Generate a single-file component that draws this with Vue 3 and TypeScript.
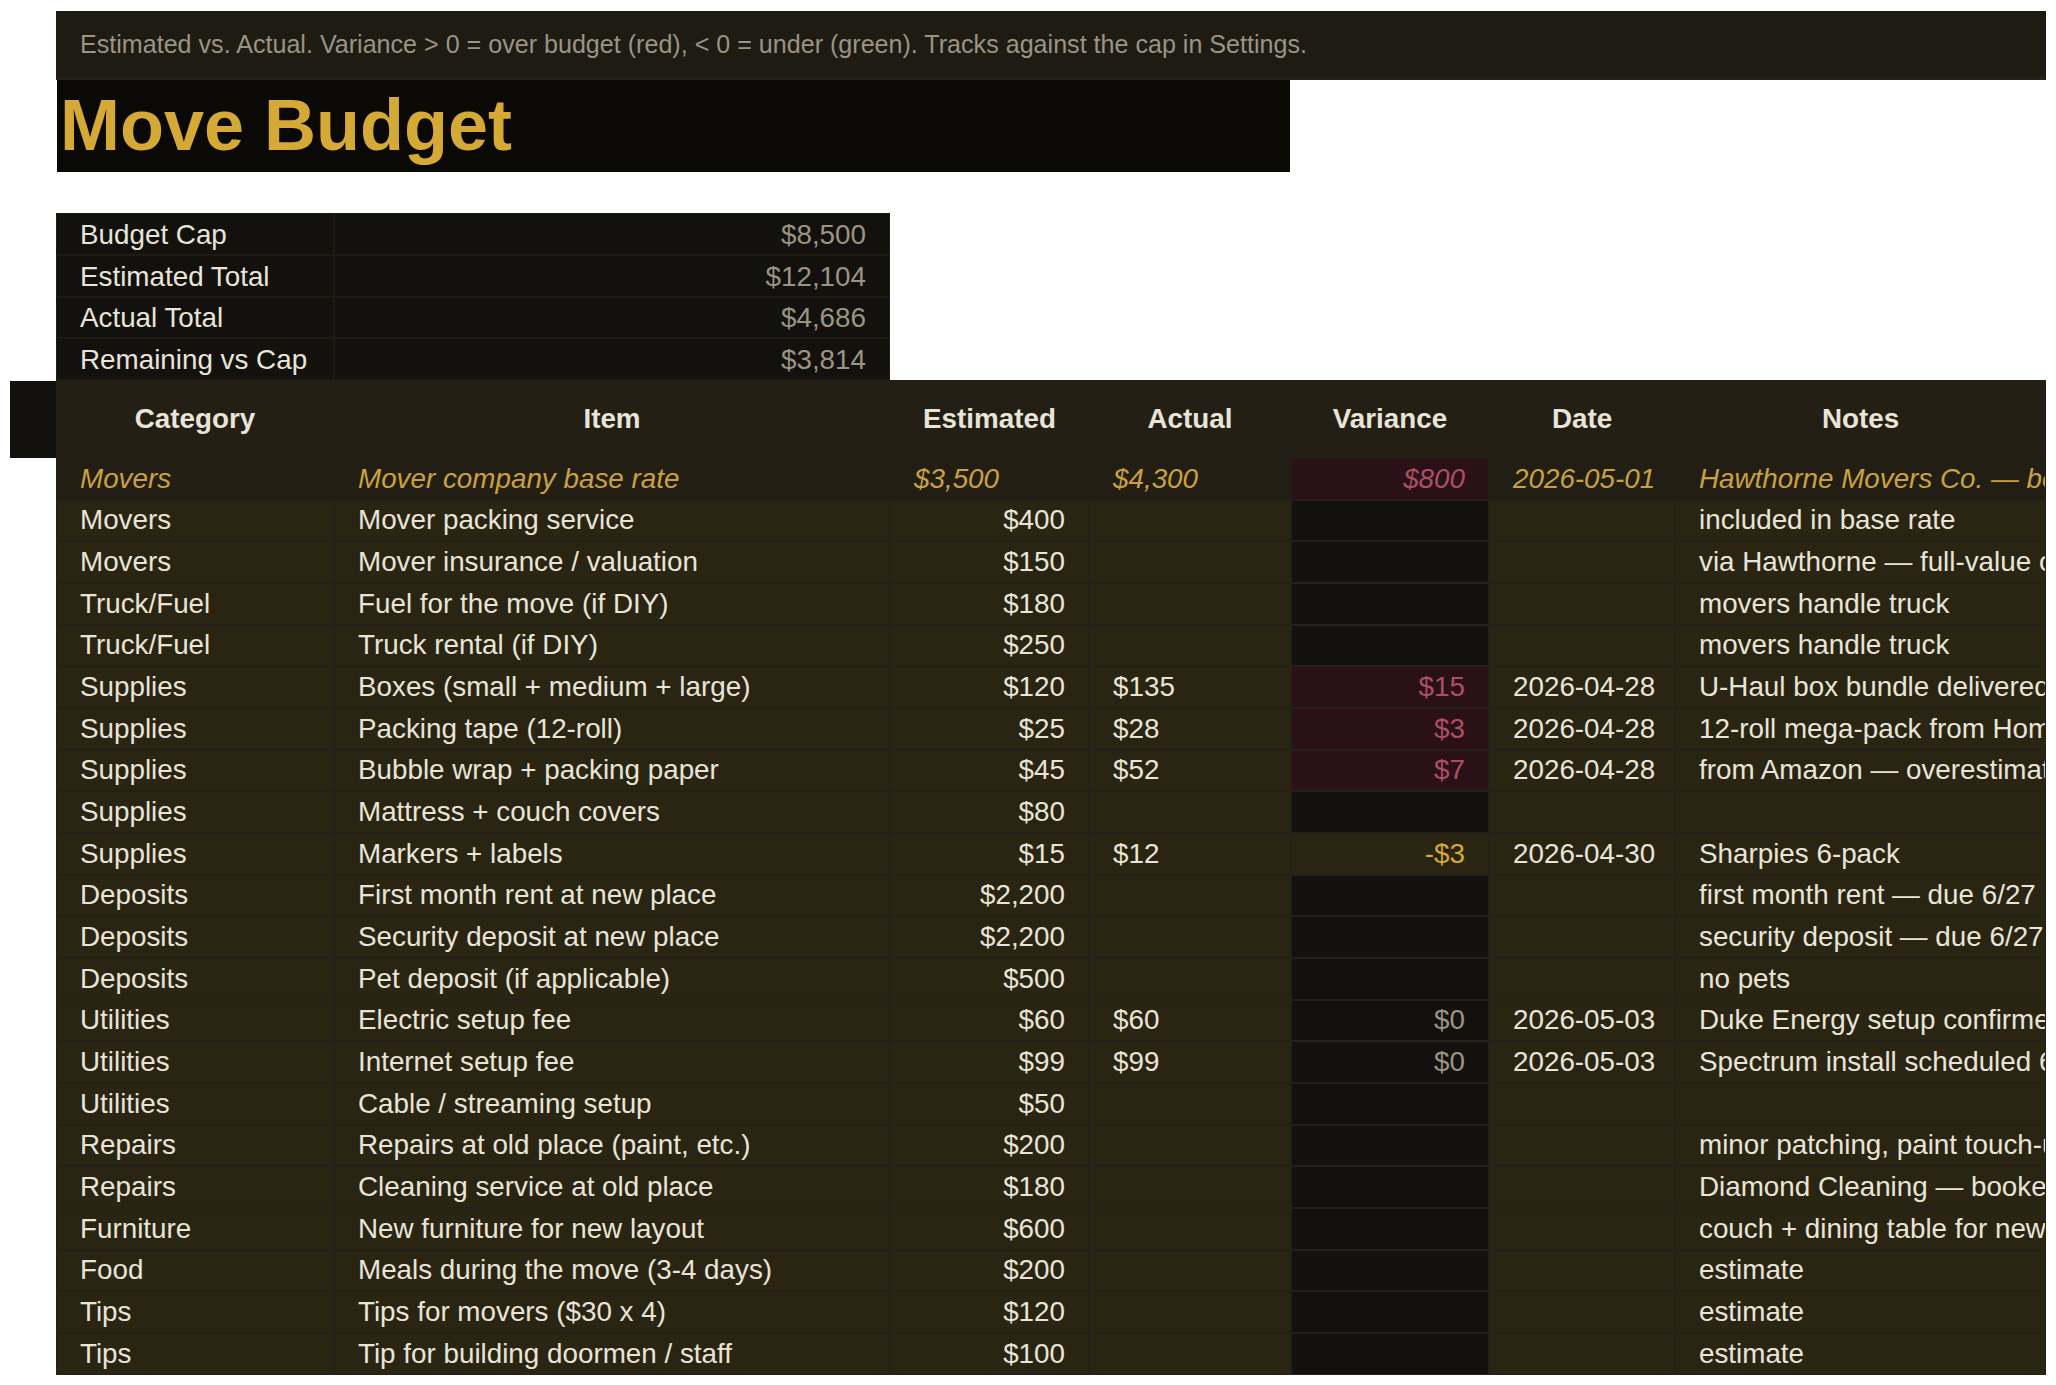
<template>
  <div class="sheet">
    <div class="hint">
      Estimated vs. Actual. Variance &gt; 0 = over budget (red), &lt; 0 = under (green). Tracks against the cap in Settings.
    </div>
    <h1 class="title">Move Budget</h1>

    <table class="summary">
      <tbody>
        <tr v-for="row in summary" :key="row.label">
          <td class="summary-label">{{ row.label }}</td>
          <td class="summary-value">{{ row.value }}</td>
        </tr>
      </tbody>
    </table>

    <div class="budget-wrap">
      <div class="gutter"></div>
      <table class="budget">
        <colgroup>
          <col class="c-cat" />
          <col class="c-item" />
          <col class="c-est" />
          <col class="c-act" />
          <col class="c-var" />
          <col class="c-date" />
          <col class="c-notes" />
        </colgroup>
        <thead>
          <tr>
            <th v-for="h in headers" :key="h">{{ h }}</th>
          </tr>
        </thead>
        <tbody>
          <tr v-for="(r, i) in rows" :key="i" :class="{ featured: i === 0 }">
            <td>{{ r.category }}</td>
            <td>{{ r.item }}</td>
            <td class="num">{{ r.estimated }}</td>
            <td>{{ r.actual }}</td>
            <td class="variance" :class="varianceClass(r.variance)">{{ r.variance }}</td>
            <td class="date">{{ r.date }}</td>
            <td class="notes">{{ r.notes }}</td>
          </tr>
        </tbody>
      </table>
    </div>
  </div>
</template>

<script setup lang="ts">
interface BudgetRow {
  category: string
  item: string
  estimated: string
  actual: string
  variance: string
  date: string
  notes: string
}

const headers = ['Category', 'Item', 'Estimated', 'Actual', 'Variance', 'Date', 'Notes']

const summary = [
  { label: 'Budget Cap', value: '$8,500' },
  { label: 'Estimated Total', value: '$12,104' },
  { label: 'Actual Total', value: '$4,686' },
  { label: 'Remaining vs Cap', value: '$3,814' }
]

const row = (
  category: string,
  item: string,
  estimated: string,
  actual = '',
  variance = '',
  date = '',
  notes = ''
): BudgetRow => ({ category, item, estimated, actual, variance, date, notes })

const rows: BudgetRow[] = [
  row('Movers', 'Mover company base rate', '$3,500', '$4,300', '$800', '2026-05-01', 'Hawthorne Movers Co. — be'),
  row('Movers', 'Mover packing service', '$400', '', '', '', 'included in base rate'),
  row('Movers', 'Mover insurance / valuation', '$150', '', '', '', 'via Hawthorne — full-value c'),
  row('Truck/Fuel', 'Fuel for the move (if DIY)', '$180', '', '', '', 'movers handle truck'),
  row('Truck/Fuel', 'Truck rental (if DIY)', '$250', '', '', '', 'movers handle truck'),
  row('Supplies', 'Boxes (small + medium + large)', '$120', '$135', '$15', '2026-04-28', 'U-Haul box bundle delivered'),
  row('Supplies', 'Packing tape (12-roll)', '$25', '$28', '$3', '2026-04-28', '12-roll mega-pack from Hom'),
  row('Supplies', 'Bubble wrap + packing paper', '$45', '$52', '$7', '2026-04-28', 'from Amazon — overestimat'),
  row('Supplies', 'Mattress + couch covers', '$80'),
  row('Supplies', 'Markers + labels', '$15', '$12', '-$3', '2026-04-30', 'Sharpies 6-pack'),
  row('Deposits', 'First month rent at new place', '$2,200', '', '', '', 'first month rent — due 6/27'),
  row('Deposits', 'Security deposit at new place', '$2,200', '', '', '', 'security deposit — due 6/27'),
  row('Deposits', 'Pet deposit (if applicable)', '$500', '', '', '', 'no pets'),
  row('Utilities', 'Electric setup fee', '$60', '$60', '$0', '2026-05-03', 'Duke Energy setup confirme'),
  row('Utilities', 'Internet setup fee', '$99', '$99', '$0', '2026-05-03', 'Spectrum install scheduled 6'),
  row('Utilities', 'Cable / streaming setup', '$50'),
  row('Repairs', 'Repairs at old place (paint, etc.)', '$200', '', '', '', 'minor patching, paint touch-u'),
  row('Repairs', 'Cleaning service at old place', '$180', '', '', '', 'Diamond Cleaning — booke'),
  row('Furniture', 'New furniture for new layout', '$600', '', '', '', 'couch + dining table for new'),
  row('Food', 'Meals during the move (3-4 days)', '$200', '', '', '', 'estimate'),
  row('Tips', 'Tips for movers ($30 x 4)', '$120', '', '', '', 'estimate'),
  row('Tips', 'Tip for building doormen / staff', '$100', '', '', '', 'estimate')
]

const varianceClass = (v: string) => {
  if (v.startsWith('-')) return 'under'
  if (v === '$0') return 'even'
  if (v) return 'over'
  return ''
}
</script>

<style scoped>
.sheet {
  padding: 11px 10px 10px 56px;
  font-family: "Liberation Sans", Arial, sans-serif;
  font-size: 27.8px;
  color: #e8e4d8;
  overflow: hidden;
}

.hint {
  box-sizing: border-box;
  height: 69px;
  padding: 0 24px;
  line-height: 66px;
  font-size: 25.1px;
  white-space: nowrap;
  color: #9a9484;
  background: #1e1b13;
  border-bottom: 3px solid #25211a;
}

.title {
  box-sizing: border-box;
  width: 1233px;
  height: 92px;
  margin: 0 0 41px 1px;
  padding: 0 0 0 3px;
  font-size: 72px;
  font-weight: 700;
  line-height: 90px;
  color: #d4a935;
  background: #0a0906;
}

table {
  border-collapse: separate;
  border-spacing: 0;
  table-layout: fixed;
}

.summary {
  width: 834px;
}

.summary td {
  box-sizing: border-box;
  height: 41.75px;
  padding: 2px 23px 0;
  line-height: 30px;
  background: #12110e;
  border: 1px solid #1e1b13;
}

.summary-label {
  width: 278px;
}

.summary-value {
  text-align: right;
  color: #9a9484;
}

.budget-wrap {
  display: flex;
  align-items: flex-start;
  margin-left: -46px;
}

.gutter {
  flex: none;
  width: 46px;
  height: 77px;
  margin-top: 1px;
  background: #12110d;
}

.budget {
  flex: none;
  width: 1990px;
}

.c-cat { width: 278px; }
.c-item { width: 556px; }
.c-est { width: 199px; }
.c-act { width: 202px; }
.c-var { width: 198px; }
.c-date { width: 186px; }
.c-notes { width: 371px; }

.budget th {
  box-sizing: border-box;
  height: 78px;
  padding: 0 23px;
  font-weight: 700;
  text-align: center;
  color: #e8e4d8;
  background: #241f15;
}

.budget td {
  box-sizing: border-box;
  height: 41.68px;
  padding: 0 23px 0.5px;
  line-height: 30px;
  white-space: nowrap;
  overflow: hidden;
  background: #2a2413;
  border: 1px solid #25201a;
}

.budget td.num {
  text-align: right;
}

.budget td.variance {
  text-align: right;
  color: #9a9484;
  background: #12110d;
}

.budget td.over {
  color: #ac4f66;
  background: #2a1118;
}

.budget td.under {
  color: #d4a935;
  background: #2a2413;
}

.budget td.even {
  color: #9a9484;
}

.budget tr.featured td {
  padding-bottom: 0;
  font-style: italic;
  color: #c9a23f;
  background: #221e14;
  border-color: #221e14;
}

.budget tr.featured td.num {
  text-align: left;
}

.budget tr.featured td.over {
  color: #ac4f66;
  background: #2a1118;
}
</style>
